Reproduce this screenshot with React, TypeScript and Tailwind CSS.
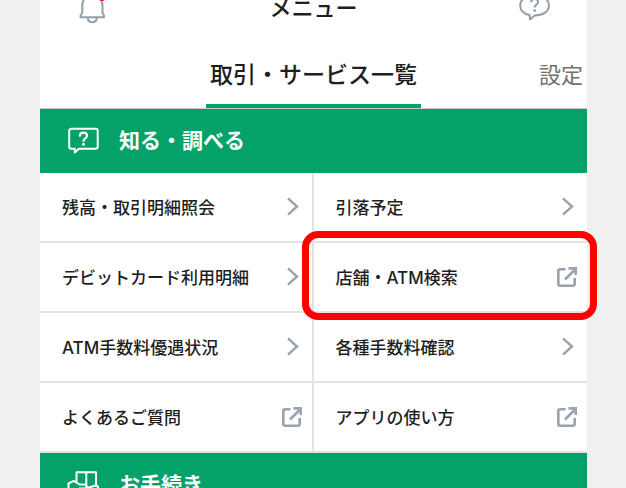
import React from 'react';

type Item = {
  label: string;
  external?: boolean;
  highlighted?: boolean;
};

const items: Item[] = [
  { label: '残高・取引明細照会' },
  { label: '引落予定' },
  { label: 'デビットカード利用明細' },
  { label: '店舗・ATM検索', external: true, highlighted: true },
  { label: 'ATM手数料優遇状況' },
  { label: '各種手数料確認' },
  { label: 'よくあるご質問', external: true },
  { label: 'アプリの使い方', external: true },
];

const BellIcon: React.FC = () => (
  <svg className="h-8 w-7" viewBox="0 0 28 32" fill="none" stroke="#939eaa" strokeWidth="2" strokeLinejoin="round" aria-hidden="true">
    <path d="M2.500 25.200h23.500v-1.700l-1.500-2.500v-7.500C24.500 7.500 20.300 4 14.300 4S4.300 7.500 4.300 13.500V21l-1.800 2.500z" />
    <path d="M9.700 26c.4 2.900 2.200 4.300 4.600 4.300s4.200-1.400 4.600-4.300" />
    <circle cx="24" cy="4.500" r="4.500" fill="#f5101f" stroke="none" />
  </svg>
);

const HelpIcon: React.FC = () => (
  <svg className="h-8 w-8" viewBox="0 0 32 32" fill="none" stroke="#939eaa" strokeWidth="2" strokeLinejoin="round" aria-hidden="true">
    <path d="M10.500 22.900C4.500 21.800 1.200 18.300 1.200 13.500 1.200 7.200 7.500 3 15.600 3s14.300 4.200 14.300 10.500-6.100 9.900-14.300 9.900l-4.600 4.100z" />
    <path d="M12.200 10.200c0-2 1.400-3.200 3.400-3.200s3.500 1.200 3.500 3c0 2.600-3.400 2.600-3.400 5.600" />
    <circle cx="15.700" cy="18.600" r="1.400" fill="#939eaa" stroke="none" />
  </svg>
);

const SearchSectionIcon: React.FC = () => (
  <svg className="h-8 w-8" viewBox="0 0 32 32" fill="none" stroke="#fff" strokeWidth="2" strokeLinejoin="round" strokeLinecap="round" aria-hidden="true">
    <path d="M4.200 3.800h24.500a2 2 0 0 1 2 2v16a2 2 0 0 1-2 2H12l-4.200 3.800v-3.800H4.200a2 2 0 0 1-2-2v-16a2 2 0 0 1 2-2z" />
    <path d="M12.900 10.800c0-2.200 1.500-3.200 3.500-3.200s3.600 1.200 3.600 3.100c0 2.600-3.500 2.600-3.500 5.300" strokeWidth="2.200" />
    <circle cx="16.500" cy="19.300" r="1.500" fill="#fff" stroke="none" />
  </svg>
);

const ProcedureSectionIcon: React.FC = () => (
  <svg className="h-8 w-8" viewBox="0 0 32 32" fill="none" stroke="#fff" strokeWidth="2" strokeLinejoin="round" strokeLinecap="round" aria-hidden="true">
    <path d="M9.500 12V3.200h19.500V16.500M19.300 3.200v13.500" />
    <path d="M1.500 27V14.500l3-1.500 2.500-1 5.500 3.500h5c2.700 0 2.700 4 0 4h-5M20 19l8-2.200c3-.8 4 1.800 1.800 3.200L18 27.500H1.500" />
  </svg>
);

const ChevronIcon: React.FC = () => (
  <svg className="size-5 shrink-0" viewBox="0 0 20 20" fill="none" stroke="#99a2ad" strokeWidth="2.400" aria-hidden="true">
    <path d="M6 1.300l9 8.200-9 8.200" />
  </svg>
);

const ExternalIcon: React.FC = () => (
  <svg className="size-5 shrink-0" viewBox="0 0 20 20" fill="none" stroke="#99a2ad" strokeWidth="2.600" aria-hidden="true">
    <path d="M8.500 2.300H3.300a2 2 0 0 0-2 2v12.400a2 2 0 0 0 2 2h12.400a2 2 0 0 0 2-2V11" />
    <path d="M8 12.500L17.500 3" />
    <path d="M11.500 1.400h7.200V8" />
  </svg>
);

const SectionHeader: React.FC<{ title: string; icon: React.ReactNode }> = ({ title, icon }) => (
  <div className="flex h-16 items-center gap-5 bg-[#04a268] pl-[27px] text-white">
    {icon}
    <h2 className="pb-1 text-[21px] leading-8 font-bold">{title}</h2>
  </div>
);

const App: React.FC = () => {
  return (
    <div className="h-screen overflow-hidden bg-[#f0f0f0] pr-[39px] pl-10 font-['Noto_Sans_CJK_JP',sans-serif] text-[#1e1e1e]">
      <div className="bg-white">
        <header className="-mt-4 grid h-12 grid-cols-[1fr_auto_1fr] items-center px-9">
          <button type="button" aria-label="お知らせ" className="justify-self-start pl-0.5">
            <BellIcon />
          </button>
          <h1 className="pb-1 text-[22px] leading-8 font-medium">メニュー</h1>
          <button type="button" aria-label="ヘルプ" className="justify-self-end">
            <HelpIcon />
          </button>
        </header>

        <nav className="grid h-[77px] grid-cols-[1fr_auto_1fr] border-b border-[#c8c8c8]">
          <a href="#services" className="col-start-2 flex items-center border-b-4 border-[#04a268] px-1 pt-2.5 text-[23px] font-medium">
            取引・サービス一覧
          </a>
          <a href="#settings" className="flex items-center justify-self-end border-b-4 border-transparent pt-2.5 pr-1 text-[22px] text-[#707070]">
            設定
          </a>
        </nav>

        <SectionHeader title="知る・調べる" icon={<SearchSectionIcon />} />

        <ul className="grid grid-cols-2">
          {items.map((item) => (
            <li key={item.label} className="relative border-b-2 border-[#e2e2e2] odd:border-r-2">
              <a href="#item" className="flex h-[68px] items-center justify-between pr-2.5 pl-[22px] font-[Inter,'Noto_Sans_CJK_JP',sans-serif] text-[17px] font-medium">
                <span className="pt-1">{item.label}</span>
                {item.external ? <ExternalIcon /> : <ChevronIcon />}
              </a>
              {item.highlighted && (
                <div className="pointer-events-none absolute -right-2.5 -bottom-[9px] -left-3 -top-3 z-10 rounded-2xl border-7 border-[#ff0000]" />
              )}
            </li>
          ))}
        </ul>

        <SectionHeader title="お手続き" icon={<ProcedureSectionIcon />} />
      </div>
    </div>
  );
};

export default App;
